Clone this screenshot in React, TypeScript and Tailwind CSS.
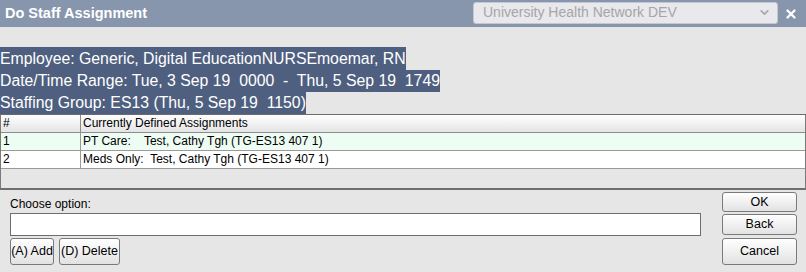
import React from "react";
import { ChevronDown, X } from "lucide-react";

const font = { fontFamily: '"Liberation Sans", Arial, sans-serif' };

const Btn = ({ label, className }: { label: string; className: string }) => (
  <button
    className={
      "border border-[#7a7a7a] rounded-[3px] bg-gradient-to-b from-white to-[#e2e2e2] text-[12.5px] text-black leading-none " +
      className
    }
  >
    {label}
  </button>
);

const rows = [
  { n: "1", text: "PT Care:    Test, Cathy Tgh (TG-ES13 407 1)", bg: "bg-[#eefdf3]" },
  { n: "2", text: "Meds Only:  Test, Cathy Tgh (TG-ES13 407 1)", bg: "bg-white" },
];

export default function App() {
  return (
    <div className="w-[806px] h-[272px] bg-[#e6e6e6] flex flex-col overflow-hidden" style={font}>
      <header className="h-[27px] bg-[#8796ad] flex items-center justify-between pl-[5px]">
        <span className="text-white font-bold text-[14.5px]">Do Staff Assignment</span>
        <div className="flex items-center">
          <div className="w-[305px] h-[22px] mt-[-2px] rounded-[3px] border border-[#c4c8d0] bg-[#e8e8ed] flex items-center justify-between pl-[9px] pr-[6px]">
            <span className="text-[14px] text-[#a6a6a6] whitespace-pre">University Health Network DEV</span>
            <ChevronDown className="size-[13px] text-[#a8a8a8]" strokeWidth={3} />
          </div>
          <X className="size-[14px] text-white ml-[6px] mr-[8px]" strokeWidth={4} />
        </div>
      </header>

      <div className="h-[20px]" />

      <div className="flex flex-col items-start text-[15.8px] text-white">
        <span className="h-[23px] leading-[23px] bg-[#4f5f7f] whitespace-pre">Employee: Generic, Digital EducationNURSEmoemar, RN</span>
        <span className="h-[22px] leading-[22px] bg-[#4f5f7f] whitespace-pre">Date/Time Range: Tue, 3 Sep 19  0000  -  Thu, 5 Sep 19  1749</span>
        <span className="h-[22px] leading-[22px] bg-[#4f5f7f] whitespace-pre">Staffing Group: ES13 (Thu, 5 Sep 19  1150)</span>
      </div>

      <div className="h-[76px] border-t border-[#6b6b6b] border-b-2 border-b-[#6e6e6e] border-x border-x-[#7a7a7a] flex flex-col text-[12px] text-black">
        <div className="h-[18px] flex border-b border-[#8c8c8c] bg-gradient-to-b from-white to-[#e4e4e4]">
          <div className="w-[80px] border-r border-[#8c8c8c] pl-[2px] leading-[17px]">#</div>
          <div className="flex-1 pl-[2px] leading-[17px]">Currently Defined Assignments</div>
        </div>
        {rows.map((r) => (
          <div key={r.n} className={"h-[18px] flex border-b border-[#9a9a9a] " + r.bg}>
            <div className="w-[80px] border-r border-[#9a9a9a] pl-[2px] leading-[17px]">{r.n}</div>
            <div className="flex-1 pl-[2px] leading-[17px] whitespace-pre">{r.text}</div>
          </div>
        ))}
      </div>

      <div className="flex-1 grid grid-cols-[701px_75px] gap-x-[21px] pt-[2px]">
        <div className="pl-[10px] flex flex-col">
          <div className="h-[21px] pt-[6px] text-[12px] text-black leading-none">Choose option:</div>
          <div className="w-[691px] h-[23px] border border-[#6e6e6e] bg-white" />
          <div className="flex gap-[5px] mt-[2px]">
            <Btn label="(A) Add" className="w-[44px] h-[27px]" />
            <Btn label="(D) Delete" className="w-[61px] h-[27px]" />
          </div>
        </div>
        <div className="flex flex-col gap-[2px]">
          <Btn label="OK" className="h-[20px]" />
          <Btn label="Back" className="h-[21px]" />
          <Btn label="Cancel" className="h-[27px] mt-[1px]" />
        </div>
      </div>
    </div>
  );
}
